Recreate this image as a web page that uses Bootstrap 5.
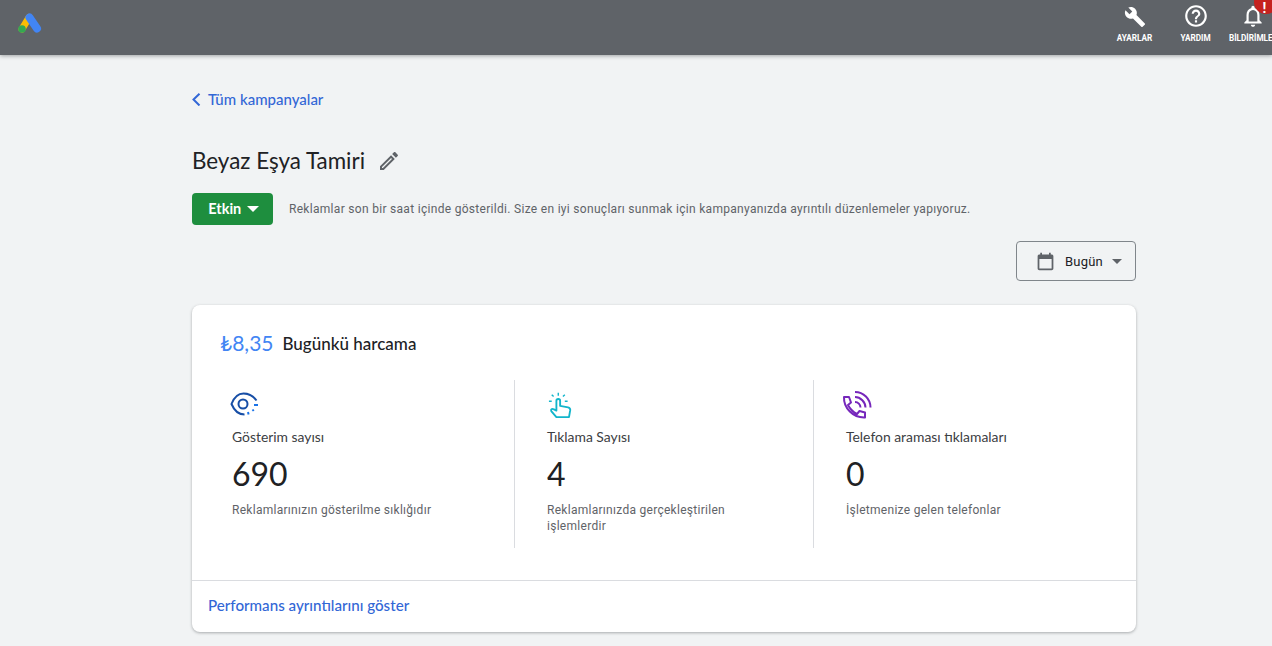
<!DOCTYPE html>
<html lang="en">
<head>
  <title>Beyaz Eşya Tamiri</title>
  <meta charset="UTF-8">
  <meta name="viewport" content="width=device-width, initial-scale=1.0">
  <link href="https://cdn.jsdelivr.net/npm/bootstrap@5.3.2/dist/css/bootstrap.min.css" rel="stylesheet">
  <style>
    html, body {
      height: 646px;
      overflow: hidden;
    }
    body {
      background-color: #f1f3f4;
      color: #202124;
      font-family: Roboto, "Liberation Sans", sans-serif;
    }
    .top-bar {
      height: 55px;
      background-color: #5f6368;
      box-shadow: 0 1px 4px rgba(60, 64, 67, .45);
      overflow: hidden;
    }
    .ads-logo {
      margin: 11px 0 0 17px;
    }
    .top-item {
      width: 61px;
      padding-top: 3px;
      color: #fff;
      font-size: 8.2px;
      font-weight: 700;
      line-height: 12px;
      text-align: center;
      white-space: nowrap;
    }
    .top-item svg {
      display: block;
      margin: 0 auto 3px;
    }
    .top-item .wrench-icon {
      margin: 3px auto 4px;
    }
    .top-item-last {
      width: 43px;
      margin-left: 3px;
      text-align: left;
    }
    .top-item-last svg {
      margin-left: 11px;
    }
    .alert-dot {
      top: -10px;
      left: 25px;
      width: 24px;
      height: 24px;
      padding: 10px 3px 0 0;
      background-color: #c5221f;
      font-size: 14px;
      line-height: 16px;
      text-align: center;
    }
    .page-wrap {
      width: 944px;
      margin-left: 192px;
    }
    .back-link {
      margin-top: 35px;
      height: 19px;
      gap: 7px;
      color: #3367d6;
      font-family: Lato, sans-serif;
      font-size: 15px;
      font-weight: 500;
      line-height: 19px;
      text-decoration: none;
    }
    .camp-title {
      margin-top: 38px;
      height: 28px;
      gap: 12px;
    }
    .camp-title h1 {
      margin: 0;
      font-family: Lato, sans-serif;
      font-size: 22.4px;
      font-weight: 400;
      line-height: 28px;
    }
    .status-row {
      margin-top: 18px;
      gap: 16px;
    }
    .btn-status {
      width: 81px;
      height: 32px;
      padding: 0 0 0 2px;
      border: 0;
      border-radius: 4px;
      background-color: #1e8e3e;
      color: #fff;
      font-family: Lato, sans-serif;
      font-size: 14.5px;
      font-weight: 700;
    }
    .btn-status .caret-down {
      margin-left: 2px;
    }
    .caret-down {
      display: inline-block;
      border-left: 6px solid transparent;
      border-right: 6px solid transparent;
      border-top: 6px solid currentColor;
      vertical-align: 2px;
    }
    .status-text {
      color: #5f6368;
      font-size: 12px;
      letter-spacing: .3px;
    }
    .btn-date {
      width: 120px;
      height: 40px;
      margin-top: 16px;
      padding: 1px 0 0 5px;
      gap: 9px;
      border: 1px solid #80868b;
      border-radius: 4px;
      color: #202124;
      font-size: 13px;
      letter-spacing: .2px;
    }
    .btn-date .caret-down {
      margin-left: 0;
      border-left-width: 5.5px;
      border-right-width: 5.5px;
      border-top-width: 5.5px;
      color: #5f6368;
      vertical-align: 1px;
    }
    .spend-card {
      height: 327px;
      margin-top: 24px;
      border: 0;
      border-radius: 8px;
      box-shadow: 0 1px 3px rgba(60, 64, 67, .4);
    }
    .spend-head {
      height: 75px;
      padding: 25px 0 0 28px;
      gap: 9px;
    }
    .spend-amount {
      color: #4285f4;
      font-family: Lato, sans-serif;
      font-size: 21px;
      line-height: 26px;
    }
    .spend-label {
      font-family: Lato, sans-serif;
      font-size: 17px;
      font-weight: 500;
      line-height: 28px;
    }
    .stats-row {
      height: 168px;
    }
    .stat-col {
      padding-top: 11px;
    }
    .stat-one {
      width: 323px;
      padding-left: 40px;
      border-right: 1px solid #dadce0;
    }
    .stat-two {
      width: 299px;
      padding-left: 32px;
      border-right: 1px solid #dadce0;
    }
    .stat-three {
      padding-left: 32px;
    }
    .stat-icon {
      display: block;
      height: 28px;
      overflow: visible;
    }
    .eye-icon {
      margin-left: -2px;
    }
    .phone-icon {
      margin-left: -3px;
    }
    .stat-name {
      margin-top: 9px;
      color: #3c4043;
      font-family: Lato, sans-serif;
      font-size: 13.9px;
      line-height: 18px;
    }
    .stat-num {
      margin-top: 7px;
      font-family: Lato, sans-serif;
      font-size: 32px;
      line-height: 42px;
    }
    .stat-note {
      margin-top: 7px;
      width: 215px;
      color: #5f6368;
      font-size: 12px;
      letter-spacing: .28px;
      line-height: 16px;
    }
    .spend-foot {
      margin-top: 32px;
      height: 52px;
      padding-left: 16px;
      border-top: 1px solid #dadce0;
      color: #3367d6;
      font-family: Lato, sans-serif;
      font-size: 15.15px;
      font-weight: 500;
      line-height: 49px;
      text-decoration: none;
    }
  </style>
</head>
<body>
  <header class="top-bar d-flex justify-content-between">
    <svg class="ads-logo" width="26" height="24" viewBox="0 0 26 24">
      <path d="M5 18 12 6.500" stroke="#fbbc04" stroke-width="7" stroke-linecap="round"/>
      <path d="M12.500 6.500 20 17.500" stroke="#4285f4" stroke-width="8" stroke-linecap="round"/>
      <circle cx="5" cy="18" r="3.800" fill="#34a853"/>
    </svg>
    <div class="d-flex">
      <div class="top-item">
        <svg class="wrench-icon" width="22" height="22" viewBox="0 0 24 24" fill="#fff"><path d="M22.700 19l-9.100-9.100c.9-2.300.4-5-1.500-6.900-2-2-5-2.400-7.400-1.300L9 6 6 9 1.600 4.700C.4 7.100.9 10.100 2.900 12.100c1.900 1.900 4.600 2.400 6.900 1.500l9.100 9.100c.4.4 1 .4 1.400 0l2.300-2.300c.5-.4.5-1.100.1-1.400z"/></svg>
        AYARLAR
      </div>
      <div class="top-item">
        <svg width="26" height="26" viewBox="0 0 24 24" fill="#fff"><path d="M11 18h2v-2h-2v2zm1-16C6.480 2 2 6.480 2 12s4.480 10 10 10 10-4.480 10-10S17.520 2 12 2zm0 18c-4.410 0-8-3.590-8-8s3.590-8 8-8 8 3.590 8 8-3.590 8-8 8zm0-14c-2.210 0-4 1.790-4 4h2c0-1.100.9-2 2-2s2 .9 2 2c0 2-3 1.750-3 5h2c0-2.250 3-2.500 3-5 0-2.210-1.790-4-4-4z"/></svg>
        YARDIM
      </div>
      <div class="top-item top-item-last position-relative">
        <svg width="26" height="26" viewBox="0 0 24 24" fill="#fff"><path d="M12 22c1.100 0 2-.9 2-2h-4c0 1.100.9 2 2 2zm6-6v-5c0-3.070-1.630-5.640-4.500-6.320V4c0-.83-.67-1.500-1.500-1.500s-1.500.67-1.500 1.500v.68C7.640 5.360 6 7.920 6 11v5l-2 2v1h16v-1l-2-2zm-2 1H8v-6c0-2.480 1.510-4.500 4-4.500s4 2.020 4 4.500v6z"/></svg>
        BİLDİRİMLER
        <span class="alert-dot position-absolute rounded-circle">!</span>
      </div>
    </div>
  </header>

  <main class="page-wrap">
    <a href="#" class="back-link d-flex align-items-center">
      <svg width="9" height="13" viewBox="0 0 9 13" fill="none" stroke="#3367d6" stroke-width="2"><path d="M7.500 .7 1.500 6.500l6 6"/></svg>
      Tüm kampanyalar
    </a>

    <div class="camp-title d-flex align-items-center">
      <h1>Beyaz Eşya Tamiri</h1>
      <svg width="24" height="24" viewBox="0 0 24 24" fill="#5f6368"><path d="M3 17.250V21h3.750L17.810 9.940l-3.750-3.750L3 17.250zM5.920 19H5v-.92l9.060-9.060.92.92L5.920 19zM20.710 7.040c.39-.39.39-1.020 0-1.410l-2.340-2.340c-.39-.39-1.020-.39-1.410 0l-1.830 1.830 3.750 3.750 1.830-1.830z"/></svg>
    </div>

    <div class="status-row d-flex align-items-center">
      <button class="btn btn-status">Etkin <span class="caret-down"></span></button>
      <span class="status-text">Reklamlar son bir saat içinde gösterildi. Size en iyi sonuçları sunmak için kampanyanızda ayrıntılı düzenlemeler yapıyoruz.</span>
    </div>

    <div class="d-flex justify-content-end">
      <button class="btn btn-date d-flex align-items-center justify-content-center">
        <svg width="21" height="21" viewBox="0 0 24 24" fill="#5f6368"><path d="M19 4h-1V2h-2v2H8V2H6v2H5c-1.100 0-2 .9-2 2v14c0 1.100.9 2 2 2h14c1.100 0 2-.9 2-2V6c0-1.100-.9-2-2-2zm0 16H5V9h14v11z"/></svg>
        Bugün
        <span class="caret-down"></span>
      </button>
    </div>

    <section class="card spend-card">
      <div class="spend-head d-flex">
        <span class="spend-amount">₺8,35</span>
        <span class="spend-label">Bugünkü harcama</span>
      </div>
      <div class="stats-row d-flex">
        <div class="stat-col stat-one">
          <svg class="stat-icon eye-icon" width="30" height="28" viewBox="0 0 30 28" fill="none" stroke="#174ea6" stroke-width="2">
            <path d="M26.500 9.500C23 4.500 18 2.500 13.500 2.500 8.500 2.500 4 6.500 1.500 13 4 19 8.500 23.500 14.500 23.500"/>
            <circle cx="13" cy="13" r="4.500"/>
            <path stroke="#1a73e8" d="M24 14h4M22.500 18.500l1.200 1.500M18 21l.6 2.500"/>
          </svg>
          <div class="stat-name">Gösterim sayısı</div>
          <div class="stat-num">690</div>
          <div class="stat-note">Reklamlarınızın gösterilme sıklığıdır</div>
        </div>
        <div class="stat-col stat-two">
          <svg class="stat-icon" width="30" height="30" viewBox="0 0 30 30" fill="none" stroke="#12b5cb" stroke-width="2">
            <path stroke-linejoin="round" d="M9 28 3.500 21.500c-.8-1.500.8-3 2.300-2L9 21V10.500c0-2.500 4-2.500 4 0V16l8.500 1.500c1.500.4 2.500 1.500 2.300 3L22.500 28z"/>
            <path d="M11 2v3M4 4l2 2M18 4l-2 2M1 11h3M18 11h3" stroke-width="1.500"/>
          </svg>
          <div class="stat-name">Tıklama Sayısı</div>
          <div class="stat-num">4</div>
          <div class="stat-note">Reklamlarınızda gerçekleştirilen işlemlerdir</div>
        </div>
        <div class="stat-col stat-three">
          <svg class="stat-icon phone-icon" width="30" height="28" viewBox="0 0 30 28" fill="none" stroke="#7627bb" stroke-width="2">
            <path stroke-linejoin="round" d="M1 6h5l2 5.500-3 2.500c2 4 5 7 9 9l2.500-3 5.500 1.500v5C10 27 .5 17 1 6z"/>
            <path d="M12 1c8.500 0 15.500 7 15.500 15.500M12 6c5.500 0 10.500 5 10.500 10.500M12 11c3 0 5.500 2.500 5.500 5.500"/>
          </svg>
          <div class="stat-name">Telefon araması tıklamaları</div>
          <div class="stat-num">0</div>
          <div class="stat-note">İşletmenize gelen telefonlar</div>
        </div>
      </div>
      <a href="#" class="spend-foot d-block">Performans ayrıntılarını göster</a>
    </section>
  </main>
</body>
</html>
